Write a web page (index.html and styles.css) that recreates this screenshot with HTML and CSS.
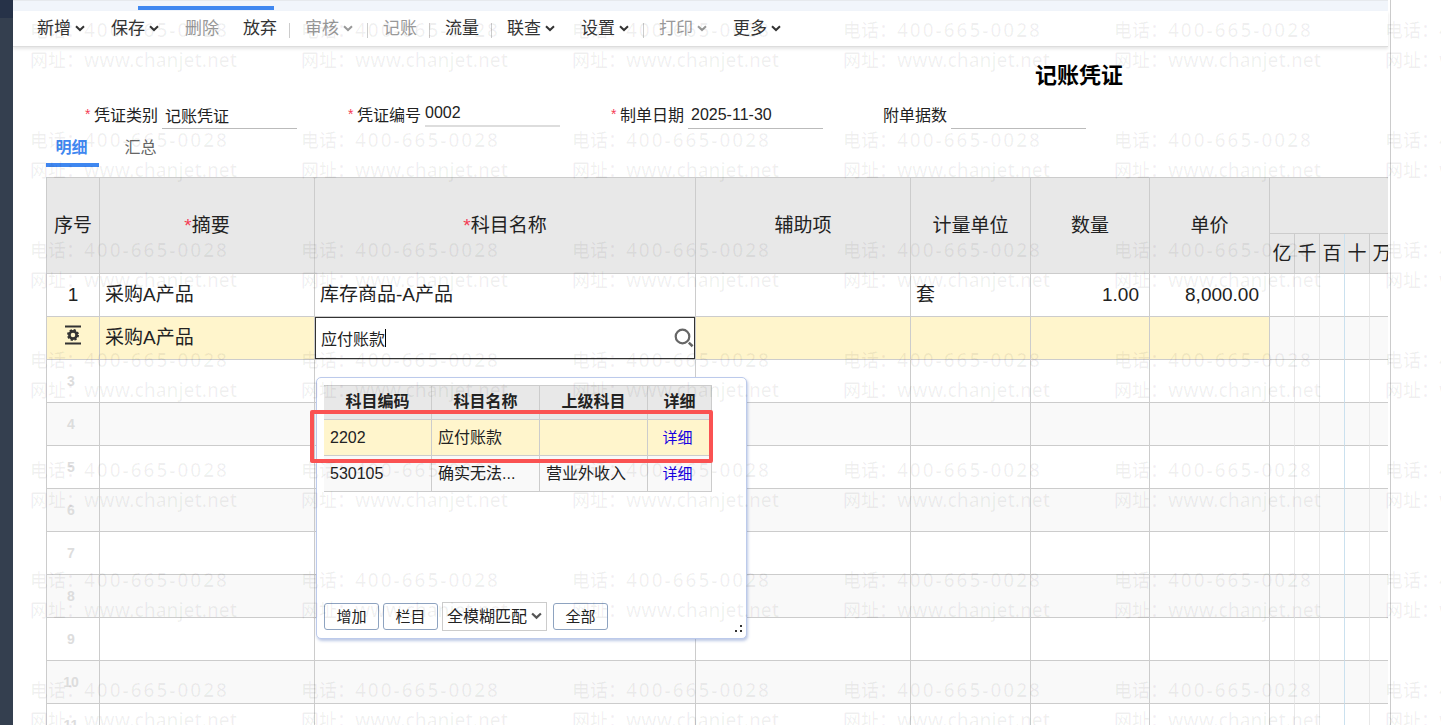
FILE: index.html
```html
<!DOCTYPE html>
<html lang="zh-CN">
<head>
  <meta charset="UTF-8">
  <meta name="viewport" content="width=device-width, initial-scale=1">
  <title>记账凭证</title>
  <link rel="stylesheet" href="styles.css">
</head>
<body>

  <svg class="defs" width="0" height="0" aria-hidden="true">
    <symbol id="arrow" viewBox="0 0 10 7">
      <path d="M1 1.2 L5 5 L9 1.2" fill="none" stroke="currentColor" stroke-width="2"/>
    </symbol>
  </svg>

  <div class="app">
    <aside class="sidebar"></aside>

    <main class="main">
      <div class="tab-strip"><div class="tab-active"></div></div>

      <!-- Toolbar -->
      <nav class="toolbar">
        <button>新增<svg><use href="#arrow"/></svg></button>
        <button>保存<svg><use href="#arrow"/></svg></button>
        <button disabled>删除</button>
        <button>放弃</button>
        <span class="sep"></span>
        <button disabled>审核<svg><use href="#arrow"/></svg></button>
        <span class="sep"></span>
        <button disabled>记账</button>
        <span class="sep"></span>
        <button>流量</button>
        <span class="sep"></span>
        <button>联查<svg><use href="#arrow"/></svg></button>
        <button>设置<svg><use href="#arrow"/></svg></button>
        <span class="sep"></span>
        <button disabled>打印<svg><use href="#arrow"/></svg></button>
        <button>更多<svg><use href="#arrow"/></svg></button>
      </nav>

      <div class="voucher">
        <h1>记账凭证</h1>

        <!-- Voucher header fields -->
        <div class="fields">
          <div class="field">
            <span class="star">*</span>
            <label for="voucherType">凭证类别</label>
            <input type="text" id="voucherType" value="记账凭证">
          </div>
          <div class="field">
            <span class="star">*</span>
            <label for="voucherNo">凭证编号</label>
            <input type="text" id="voucherNo" class="number" value="0002">
          </div>
          <div class="field">
            <span class="star">*</span>
            <label for="voucherDate">制单日期</label>
            <input type="text" id="voucherDate" value="2025-11-30">
          </div>
          <div class="field">
            <span class="star"></span>
            <label for="attachments">附单据数</label>
            <input type="text" id="attachments">
          </div>
        </div>

        <div class="tabs">
          <button class="tab active">明细</button>
          <button class="tab">汇总</button>
        </div>

        <!-- Entry grid -->
        <table class="entries">
          <colgroup>
            <col class="col-no">
            <col class="col-summary">
            <col class="col-account">
            <col class="col-aux">
            <col class="col-unit">
            <col class="col-qty">
            <col class="col-price">
            <col class="col-digit" span="5">
          </colgroup>
          <thead>
            <tr class="head-top">
              <th rowspan="2">序号</th>
              <th rowspan="2"><span class="star">*</span>摘要</th>
              <th rowspan="2"><span class="star">*</span>科目名称</th>
              <th rowspan="2">辅助项</th>
              <th rowspan="2">计量单位</th>
              <th rowspan="2">数量</th>
              <th rowspan="2">单价</th>
              <th colspan="5"></th>
            </tr>
            <tr class="head-digits">
              <th>亿</th>
              <th>千</th>
              <th class="mark">百</th>
              <th>十</th>
              <th>万</th>
            </tr>
          </thead>
          <tbody id="entryRows">
            <tr>
              <td class="no">1</td>
              <td>采购A产品</td>
              <td>库存商品-A产品</td>
              <td></td>
              <td>套</td>
              <td class="num">1.00</td>
              <td class="num">8,000.00</td>
              <td class="digit"></td>
              <td class="digit"></td>
              <td class="digit mark"></td>
              <td class="digit"></td>
              <td class="digit"></td>
            </tr>
            <tr class="editing">
              <td class="no">
                <svg class="row-icon" width="18" height="20" viewBox="0 0 18 20">
                  <path d="M1 1.5 H17 M1 18.5 H17" stroke="#333" stroke-width="2"/>
                  <circle cx="9" cy="10" r="5" fill="none" stroke="#333" stroke-width="2" stroke-dasharray="2.2 1.73"/>
                  <circle cx="9" cy="10" r="3.6" fill="none" stroke="#333" stroke-width="2.6"/>
                </svg>
              </td>
              <td>采购A产品</td>
              <td class="edit-cell">
                <div class="account-edit">
                  <input type="text" aria-label="科目名称" value="应付账款">
                  <span class="caret"></span>
                  <svg class="search-icon" width="20" height="20" viewBox="0 0 20 20">
                    <circle cx="8.5" cy="8.5" r="6.8" fill="none" stroke="#666" stroke-width="2.2"/>
                    <path d="M14.8 14.6 L18.6 18.2" stroke="#666" stroke-width="2.6"/>
                  </svg>

                  <!-- Account lookup -->
                  <div class="lookup">
                    <table>
                      <thead>
                        <tr><th>科目编码</th><th>科目名称</th><th>上级科目</th><th>详细</th></tr>
                      </thead>
                      <tbody>
                        <tr class="selected">
                          <td>2202</td><td>应付账款</td><td></td><td class="link"><a href="#">详细</a></td>
                        </tr>
                        <tr>
                          <td>530105</td><td>确实无法...</td><td>营业外收入</td><td class="link"><a href="#">详细</a></td>
                        </tr>
                      </tbody>
                    </table>
                    <div class="highlight"></div>
                    <div class="lookup-actions">
                      <button>增加</button>
                      <button>栏目</button>
                      <span class="match">
                        <select aria-label="匹配方式">
                          <option>全模糊匹配</option>
                        </select>
                        <svg><use href="#arrow"/></svg>
                      </span>
                      <button>全部</button>
                    </div>
                    <svg class="grip" width="9" height="9" viewBox="0 0 9 9">
                      <path d="M6 1h2v2h-2z M1 6h2v2h-2z M6 6h2v2h-2z" fill="#333"/>
                    </svg>
                  </div>
                </div>
              </td>
              <td></td>
              <td></td>
              <td></td>
              <td></td>
              <td class="digit"></td>
              <td class="digit"></td>
              <td class="digit mark"></td>
              <td class="digit"></td>
              <td class="digit"></td>
            </tr>
          </tbody>
        </table>
      </div>
    </main>

    <div class="watermark" id="watermark" aria-hidden="true"></div>
  </div>

  <script>
    // Blank rows below the ones in use
    const entryRows = document.getElementById("entryRows");
    for (let n = 3; n <= 11; n++) {
      const row = document.createElement("tr");
      row.innerHTML = `<td class="no blank">${n}</td>` +
        "<td></td>".repeat(6) +
        '<td class="digit"></td><td class="digit"></td><td class="digit mark"></td><td class="digit"></td><td class="digit"></td>';
      entryRows.appendChild(row);
    }

    // Repeating contact watermark
    const watermark = document.getElementById("watermark");
    for (let i = 0; i < 7 * 6; i++) {
      const stamp = document.createElement("div");
      stamp.className = "stamp";
      stamp.innerHTML = `
        <div>电话：<span class="phone">400-665-0028</span></div>
        <div>网址：<span>www.chanjet.net</span></div>
      `;
      watermark.appendChild(stamp);
    }
  </script>

</body>
</html>
```
FILE: styles.css
```css
* {
  box-sizing: border-box;
}
body {
  margin: 0;
  font-family: "Liberation Sans", "Noto Sans CJK SC", sans-serif;
  font-size: 16px;
  color: #222;
  background: #fff;
}
button, input, select {
  font-family: inherit;
  color: inherit;
  margin: 0;
}
.defs {
  position: absolute;
}
.app {
  position: relative;
  display: flex;
  height: 100vh;
  overflow: hidden;
}
.sidebar {
  flex: none;
  width: 13px;
  background: linear-gradient(#263248 18px, #343f4f 18px);
}
.main {
  flex: 1;
  min-width: 0;
  margin-right: 50px;
  padding-right: 2px;
  border-right: 1px solid #ccc;
}
.tab-strip {
  height: 11px;
  padding: 5px 0 0 125px;
  background: #f1f5fb;
  border-top: 1px solid #e6e9ed;
}
.tab-active {
  width: 136px;
  height: 4px;
  background: #3f87f0;
}

/* Toolbar */
.toolbar {
  display: flex;
  align-items: center;
  height: 36px;
  padding: 1px 0 0 12px;
  border-bottom: 1px solid #ddd;
  box-shadow: 0 2px 3px rgba(0,0,0,0.1);
}
.toolbar button {
  display: flex;
  align-items: center;
  padding: 0 12px;
  border: none;
  background: none;
  font-size: 17px;
  line-height: 24px;
  color: #333;
}
.toolbar button:disabled {
  color: #999;
}
.toolbar svg {
  width: 10px;
  height: 7px;
  margin: 0 2px 2px 4px;
}
.sep {
  width: 4px;
  height: 15px;
  margin-top: 2px;
  border-left: 1px solid #ccc;
}

/* Voucher */
.voucher {
  padding: 14px 0 0 33px;
  overflow: hidden;
}
.voucher h1 {
  margin: 0;
  padding-right: 265px;
  text-align: right;
  font-size: 22px;
  line-height: 30px;
  color: #000;
}
.fields {
  display: flex;
  margin-top: 8px;
  padding-left: 38px;
}
.field {
  flex: none;
  display: flex;
  align-items: center;
  width: 263px;
  height: 30px;
}
.star {
  color: #f43b54;
}
.field .star {
  width: 10px;
  padding-left: 1px;
  font-size: 14px;
}
.field input {
  width: 135px;
  height: 30px;
  margin-left: 4px;
  padding: 2px 3px 0;
  border: none;
  border-bottom: 1px solid #bbb;
  background: none;
  font-size: 16px;
}
.field .number {
  height: 26px;
  padding: 0;
  border-bottom: 2px solid #ddd;
}
.tabs {
  display: flex;
  gap: 16px;
  margin: 4px 0 10px;
}
.tab {
  width: 53px;
  padding: 0 2px 0 0;
  border: none;
  border-bottom: 4px solid transparent;
  background: none;
  font-size: 16px;
  line-height: 30px;
  color: #666;
}
.tab.active {
  color: #3f87f0;
  font-weight: bold;
  border-color: #3f87f0;
}

/* Entry grid */
.entries {
  table-layout: fixed;
  width: 1349px;
  border-collapse: separate;
  border-spacing: 0;
  border-top: 1px solid #ccc;
  border-left: 1px solid #ccc;
  font-size: 19px;
}
.col-no { width: 53px; }
.col-summary, .col-aux { width: 215px; }
.col-account { width: 381px; }
.col-unit, .col-price { width: 120px; }
.col-qty { width: 119px; }
.col-digit { width: 25px; }
.entries > thead th {
  padding: 0 0 5px;
  background: #e8e8e8;
  border-right: 1px solid #ccc;
  border-bottom: 1px solid #ccc;
  font-weight: normal;
}
.head-top { height: 56px; }
.head-digits { height: 40px; }
.entries > tbody > tr {
  height: 43px;
}
.entries > tbody > tr > td {
  height: 43px;
  padding: 0 10px 0 5px;
  line-height: 24px;
  border-right: 1px solid #ccc;
  border-bottom: 1px solid #ccc;
}
.entries > tbody > tr:nth-child(even) {
  background: #f9f9f9;
}
.entries > tbody > tr > .no {
  padding: 0;
  text-align: center;
}
.entries > tbody > tr > .blank {
  padding-right: 4px;
  font-size: 14px;
  font-weight: bold;
  color: #ddd;
}
.num {
  text-align: right;
}
.entries > tbody > tr > .digit {
  padding: 0;
  border-right-color: #e8e8e8;
}
.entries > tbody > tr > .mark, .entries > thead .mark {
  border-right-color: #cbe1ef;
}
.editing td:not(.digit) {
  background: #fff5cc;
}
.row-icon {
  display: block;
  margin: 0 auto 6px;
}

/* Account editor */
.entries > tbody > tr > .edit-cell {
  padding: 0;
}
.account-edit {
  position: relative;
  height: 42px;
}
.account-edit > input {
  display: block;
  width: 100%;
  height: 100%;
  padding: 0 30px 1px 5px;
  border: 1px solid #333;
  border-radius: 0;
  background: #fff;
  font-size: 16px;
}
.caret {
  position: absolute;
  left: 70px;
  top: 12px;
  width: 1px;
  height: 18px;
  background: #000;
}
.search-icon {
  position: absolute;
  right: 1px;
  top: 11px;
}

/* Lookup popup */
.lookup {
  position: absolute;
  left: 1px;
  top: 60px;
  z-index: 2;
  width: 431px;
  height: 262px;
  padding: 7px;
  display: flex;
  flex-direction: column;
  justify-content: space-between;
  background: #fff;
  border: 1px solid #bccaeb;
  border-radius: 5px;
  box-shadow: 1px 2px 3px rgba(90,120,190,0.4);
  font-size: 16px;
}
.lookup table {
  table-layout: fixed;
  width: 388px;
  border-collapse: separate;
  border-spacing: 0;
  border-top: 1px solid #ccc;
}
.lookup th, .lookup td {
  height: 36px;
  padding: 0 6px;
  line-height: 24px;
  border-right: 1px solid #ccc;
  border-bottom: 1px solid #ccc;
}
.lookup th {
  height: 34px;
  width: 108px;
  padding: 0 4px 2px;
  background: #e8e8e8;
  color: #222;
}
.lookup th:last-child {
  width: 64px;
}
.editing .lookup td {
  background: #f9f9f9;
}
.editing .lookup .selected td {
  background: #fff5cc;
}
.editing .lookup .link {
  padding: 0 4px 0 0;
  text-align: center;
  font-size: 15px;
}
.lookup a {
  color: #1500e0;
  text-decoration: none;
}
.highlight {
  position: absolute;
  left: -7px;
  top: 32px;
  width: 403px;
  height: 53px;
  border: 4px solid #fa5252;
  border-radius: 2px;
}
.lookup-actions {
  display: flex;
  align-items: center;
  gap: 4px;
}
.lookup-actions button {
  width: 55px;
  height: 27px;
  padding: 0;
  border: 1px solid #8ea3c0;
  border-radius: 3px;
  background: #fff;
  font-size: 15px;
  line-height: 20px;
}
.match {
  position: relative;
  margin-right: 2px;
}
.match select {
  display: block;
  width: 105px;
  height: 29px;
  padding: 0 4px;
  border: 1px solid #ccc;
  border-radius: 0;
  background: #fff;
  appearance: none;
  font-size: 16px;
}
.match svg {
  position: absolute;
  right: 5px;
  top: 10px;
  width: 11px;
  height: 8px;
  color: #555;
  pointer-events: none;
}
.grip {
  position: absolute;
  right: 3px;
  bottom: 5px;
}

/* Watermark */
.watermark {
  position: absolute;
  inset: 0;
  z-index: 5;
  display: grid;
  grid-template-columns: repeat(6, 271px);
  grid-auto-rows: 110px;
  padding: 15px 0 0 30px;
  overflow: hidden;
  pointer-events: none;
  font-family: "Noto Sans", "Noto Sans CJK SC", sans-serif;
  font-size: 18px;
  font-weight: 500;
  line-height: 30px;
  color: rgba(0,0,0,0.06);
  white-space: nowrap;
}
.stamp span {
  font-size: 19px;
}
.stamp .phone {
  letter-spacing: 2px;
}
```
